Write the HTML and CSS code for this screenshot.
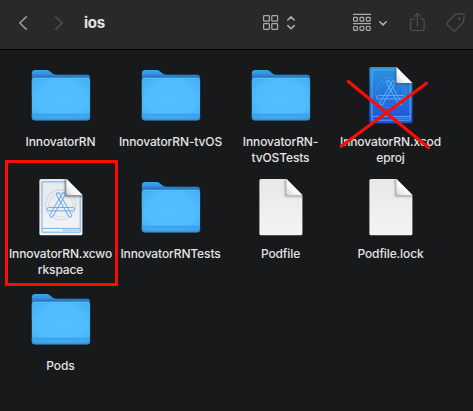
FILE: index.html
```html
<!DOCTYPE html>
<html lang="en">
<head>
<meta charset="utf-8">
<title>ios</title>
<link rel="stylesheet" href="styles.css">
</head>
<body>
<svg class="defs" width="0" height="0" aria-hidden="true">
  <defs>
    <linearGradient id="back" x1="0" y1="0" x2="0" y2="1"><stop offset="0" stop-color="#3fa6ea"/><stop offset=".15" stop-color="#3393e0"/><stop offset=".3" stop-color="#2470c2"/></linearGradient>
    <radialGradient id="front" cx=".5" cy=".5" r=".72"><stop offset="0" stop-color="#53c1ff"/><stop offset=".6" stop-color="#4ebcfd"/><stop offset="1" stop-color="#40a9ef"/></radialGradient>
    <linearGradient id="paper" x1="0" y1="0" x2="0" y2="1"><stop offset="0" stop-color="#e8e8e8"/><stop offset="1" stop-color="#f4f4f4"/></linearGradient>
    <linearGradient id="blue" x1="0" y1="0" x2="0" y2="1"><stop offset="0" stop-color="#2d94dc"/><stop offset="1" stop-color="#1d50dc"/></linearGradient>
    <linearGradient id="fold" x1="0" y1="1" x2=".6" y2=".4"><stop offset="0" stop-color="#d2d2d2"/><stop offset=".5" stop-color="#f4f4f4"/><stop offset="1" stop-color="#fff"/></linearGradient>
    <filter id="soft" x="-50%" y="-50%" width="200%" height="200%"><feGaussianBlur stdDeviation="1"/></filter>
    <clipPath id="sheet"><path d="M10 2H35.5L51.4 18V56.7Q51.4 58.3 49.8 58.3H10Q8.4 58.3 8.4 56.7V3.6Q8.4 2 10 2Z"/></clipPath>
    <symbol id="folder" viewBox="0 0 60 60">
      <path d="M.8 8.5Q.8 5 4.2 5H15.2C20 5 20.5 9.8 25.5 9.8H56Q59.1 9.8 59.1 13V30H.8Z" fill="url(#back)"/>
      <path d="M.8 15.6Q.8 12.8 3.6 12.8H56.3Q59.1 12.8 59.1 15.6V52.2Q59.1 55.3 56 55.3H3.9Q.8 55.3 .8 52.2Z" fill="url(#front)"/>
      <path d="M.8 49.3H59.1V52.2Q59.1 55.3 56 55.3H3.9Q.8 55.3 .8 52.2Z" fill="#3ba0e8" opacity=".7"/>
      <path d="M.8 49.3H59.1" stroke="#3394db" stroke-width=".6"/>
      <path d="M2 13.3H58" stroke="#65c5fa" stroke-width=".7"/>
      <path d="M1.3 52.4Q1.5 54.9 4 54.9H56Q58.5 54.9 58.7 52.4" fill="none" stroke="#287fbc" stroke-width=".8"/>
    </symbol>
    <symbol id="corner" viewBox="0 0 60 60">
      <g clip-path="url(#sheet)"><path d="M35 2V18.5H52" fill="none" stroke="#333" stroke-width="2" opacity=".45" filter="url(#soft)"/></g>
      <path d="M35.5 2L51.4 18H37Q35.5 18 35.5 16.5Z" fill="url(#fold)"/>
    </symbol>
    <symbol id="page" viewBox="0 0 60 60">
      <path d="M10 2H35.5L51.4 18V56.7Q51.4 58.3 49.8 58.3H10Q8.4 58.3 8.4 56.7V3.6Q8.4 2 10 2Z" fill="url(#paper)"/>
      <use href="#corner"/>
    </symbol>
    <symbol id="blueprint" viewBox="0 0 60 60">
      <g fill="none" stroke="currentColor">
        <path d="M35 4.9H11V55.2H49.2V18.6M11 51.4H49.2" stroke-width=".9"/>
        <path d="M32 53.3H48" stroke-width="1.6" stroke-dasharray="1.4 .5" opacity=".65"/>
        <circle cx="29.7" cy="27.8" r="15.2" stroke-width=".8" opacity=".45"/>
        <circle cx="29.7" cy="27.8" r="12.2" stroke-width=".6" opacity=".35"/>
        <g stroke-width=".9">
          <rect x="15.8" y="30.5" width="28" height="3.4" rx="1.7"/>
          <rect x="-1.6" y="0" width="3.2" height="27.5" rx="1.6" transform="translate(33.4 16) rotate(30)"/>
          <rect x="-1.6" y="0" width="3.2" height="27.5" rx="1.6" transform="translate(26.2 16) rotate(-30)"/>
        </g>
      </g>
    </symbol>
  </defs>
</svg>
<header class="toolbar">
  <svg width="473" height="49" viewBox="0 0 473 49" fill="none" stroke-linecap="round" stroke-linejoin="round">
    <path d="M26.3 16.7L19.8 23L26.3 29.3" stroke="#a3a3a3" stroke-width="1.5"/>
    <path d="M55.6 16.7L62.1 23L55.6 29.3" stroke="#4e4e4e" stroke-width="1.5"/>
    <g stroke="#acacac" stroke-width="1.2">
      <rect x="263.6" y="15.6" width="5.8" height="5.6" rx=".8"/><rect x="271.8" y="15.6" width="5.8" height="5.6" rx=".8"/>
      <rect x="263.6" y="23.7" width="5.8" height="5.6" rx=".8"/><rect x="271.8" y="23.7" width="5.8" height="5.6" rx=".8"/>
      <path d="M287.8 20L291 16.9L294.2 20M287.8 25.6L291 28.7L294.2 25.6" stroke-width="1.6"/>
      <path d="M353.4 14.4H370.6M353.4 23.6H370.6" stroke-width="1.1"/>
      <rect x="353.6" y="17.3" width="3.8" height="3.8" rx=".7"/><rect x="360" y="17.3" width="3.8" height="3.8" rx=".7"/><rect x="366.4" y="17.3" width="3.8" height="3.8" rx=".7"/>
      <rect x="353.6" y="26.5" width="3.8" height="3.8" rx=".7"/><rect x="360" y="26.5" width="3.8" height="3.8" rx=".7"/><rect x="366.4" y="26.5" width="3.8" height="3.8" rx=".7"/>
      <path d="M379.8 21.8L383 24.9L386.2 21.8" stroke-width="1.6"/>
    </g>
    <g stroke="#505050" stroke-width="1.2">
      <path d="M414.4 19H412.2Q410.7 19 410.7 20.5V29Q410.7 30.5 412.2 30.5H422.6Q424.1 30.5 424.1 29V20.5Q424.1 19 422.6 19H420.4M417.4 26V13.6M414.4 16.4L417.4 13.4L420.4 16.4"/>
      <path d="M456.1 14.4L461.8 13.7Q464.2 13.5 464.1 16L463.6 21.2Q463.5 22 462.9 22.7L455.5 30.3Q454.2 31.6 452.9 30.3L447.5 25Q446.2 23.8 447.4 22.5L454.5 15.1Q455.2 14.5 456.1 14.4Z"/>
      <circle cx="459.3" cy="18.8" r=".7"/>
    </g>
  </svg>
  <h1 class="title">ios</h1>
</header>
<main class="files">
  <div class="file"><svg class="icon"><use href="#folder"/></svg><span class="name">InnovatorRN</span></div>
  <div class="file"><svg class="icon"><use href="#folder"/></svg><span class="name">InnovatorRN-tvOS</span></div>
  <div class="file"><svg class="icon"><use href="#folder"/></svg><span class="name">InnovatorRN-<br>tvOSTests</span></div>
  <div class="file">
    <svg class="icon project" viewBox="0 0 60 60">
      <path d="M10 2H35.5L51.4 18V56.7Q51.4 58.3 49.8 58.3H10Q8.4 58.3 8.4 56.7V3.6Q8.4 2 10 2Z" fill="url(#blue)"/>
      <use href="#blueprint"/><use href="#corner"/>
    </svg>
    <span class="name">InnovatorRN.xcod<br>eproj</span>
    <svg class="cross" viewBox="0 0 110 112"><path d="M12.3 16.5L92.7 82.7M90.5 18.3L5.2 81.3" stroke="#f50f05" stroke-width="3.2" stroke-linecap="round"/></svg>
  </div>
  <div class="file">
    <svg class="icon workspace" viewBox="0 0 60 60"><use href="#page"/><use href="#blueprint"/><use href="#corner"/></svg>
    <span class="name">InnovatorRN.xcwo<br>rkspace</span>
    <i class="frame"></i>
  </div>
  <div class="file"><svg class="icon"><use href="#folder"/></svg><span class="name">InnovatorRNTests</span></div>
  <div class="file"><svg class="icon"><use href="#page"/></svg><span class="name">Podfile</span></div>
  <div class="file"><svg class="icon"><use href="#page"/></svg><span class="name">Podfile.lock</span></div>
  <div class="file"><svg class="icon"><use href="#folder"/></svg><span class="name">Pods</span></div>
</main>
</body>
</html>
```
FILE: styles.css
```css
* { box-sizing: border-box; }
body {
  margin: 0;
  height: 411px;
  overflow: hidden;
  background: #18191b;
  color: #e4e4e4;
  font-family: Inter, "Liberation Sans", sans-serif;
}
.defs { position: absolute; }
.toolbar {
  display: grid;
  height: 50px;
  background: #292929;
  border-bottom: 1px solid #000;
}
.toolbar > * { grid-area: 1 / 1; }
.title {
  margin: 0;
  padding: 13px 0 0 84px;
  font-size: 15px;
  line-height: 20px;
  font-weight: 700;
  letter-spacing: -0.3px;
}
.files {
  display: grid;
  grid-template-columns: repeat(4, 110px);
  grid-auto-rows: 112px;
  padding: 15px 0 0 6px;
}
.file {
  position: relative;
  display: flex;
  flex-direction: column;
  align-items: center;
  gap: 9px;
}
.icon { width: 60px; height: 60px; flex: none; }
.project { color: #5cb4ee; }
.workspace { color: #62a8f0; }
.name {
  margin-right: 1px;
  font-size: 12px;
  line-height: 16px;
  font-weight: 500;
  letter-spacing: -0.12px;
  text-align: center;
  white-space: nowrap;
}
.cross { position: absolute; left: 0; top: 0; width: 110px; height: 112px; }
.frame {
  position: absolute;
  left: -1px;
  top: -17px;
  width: 113px;
  height: 126px;
  border: 3px solid #f50f05;
}
```
